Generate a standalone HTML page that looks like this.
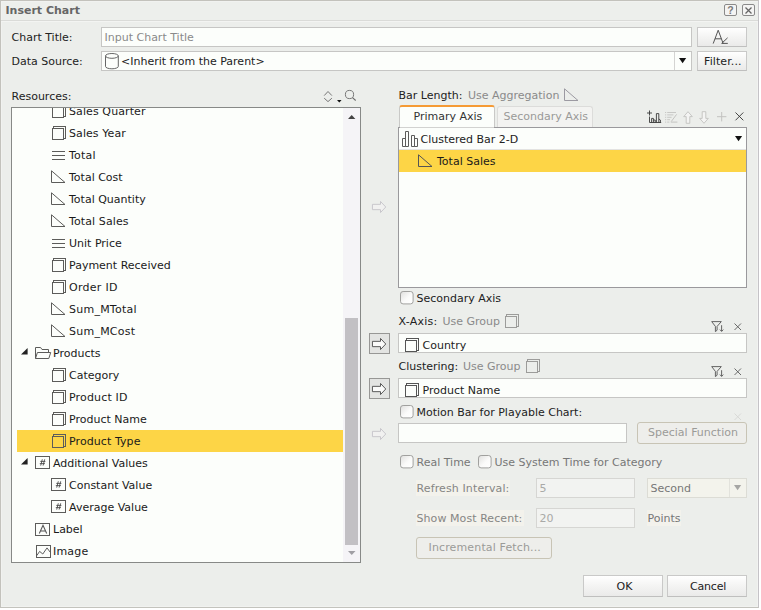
<!DOCTYPE html>
<html><head><meta charset="utf-8"><title>Insert Chart</title>
<style>
html,body{margin:0;padding:0;}
body{width:761px;height:610px;overflow:hidden;background:#ffffff;font-family:"DejaVu Sans", "Liberation Sans", sans-serif;font-size:11px;position:relative;}
#dlg{position:absolute;left:0;top:0;width:757px;height:606px;background:#eceeeb;border:1px solid #c3c2bc;border-right-color:#c5c3c7;border-bottom-color:#c3c3bd;box-sizing:content-box;box-shadow:inset 1px 1px 0 #f1f2f0,inset -1px -1px 0 #f1f2f0;}
.abs{position:absolute;box-sizing:border-box;}
.t{position:absolute;white-space:nowrap;line-height:14px;height:14px;font-size:11px;}
.ic{position:absolute;overflow:visible;}
.fld{position:absolute;box-sizing:border-box;background:#fcfefb;border:1px solid #c6c6c4;}
.btn{position:absolute;box-sizing:border-box;border:1px solid #c9c9c8;border-bottom-color:#bfbfbe;background:linear-gradient(#ffffff,#f5f5f4 45%,#eaeae9);text-align:center;}
.row{position:absolute;left:0;height:22px;}
.cb{position:absolute;box-sizing:border-box;width:13px;height:13px;border:1px solid #8e8e8e;border-radius:3px;background:linear-gradient(135deg,#ffffff 40%,#e4e4e2);}
</style></head><body>
<div id="dlg"></div>

<div class="abs" style="left:1px;top:1px;width:757px;height:19px;background:#edefec;box-shadow:inset 1px 1px 0 #f1f2f0;"></div>
<div class="abs" style="left:1px;top:20px;width:757px;height:1px;background:#dadbd8;"></div>
<div class="abs" style="left:1px;top:21px;width:757px;height:1px;background:#f3f4f2;"></div>
<div class="t " style="left:5.5px;top:4px;color:#666;font-weight:bold;">Insert Chart</div>
<div class="abs" style="left:724px;top:4px;width:13px;height:12px;border:1px solid #8a8a8a;border-radius:2px;background:#f4f4f3;"></div>
<div class="t" style="left:724px;top:3px;width:13px;text-align:center;color:#7a7a7a;font-size:10.5px;font-weight:bold;font-family:'Liberation Sans',sans-serif;">?</div>
<div class="abs" style="left:742px;top:4px;width:13px;height:12px;border:1px solid #8a8a8a;border-radius:2px;background:#f4f4f3;"></div>
<svg class="ic" style="left:745px;top:6.5px" width="7.5" height="7.5" viewBox="0 0 7.5 7.5"><path d="M0.5 0.5 L6.5 6.5 M6.5 0.5 L0.5 6.5" stroke="#666" stroke-width="1.3" fill="none"/></svg>
<div class="t " style="left:11.5px;top:31px;color:#222;">Chart Title:</div>
<div class="fld" style="left:101px;top:27px;width:591px;height:20px;"></div>
<div class="t " style="left:104.5px;top:31px;color:#8a8a8a;">Input Chart Title</div>
<div class="btn" style="left:697px;top:27px;width:50px;height:20px;"></div>
<svg class="ic" style="left:712px;top:29px" width="18" height="16" viewBox="0 0 18 16"><path d="M1.2 14.6 L6.2 1.2 L11.2 14.6 M3 9.8 H9.4" stroke="#555" stroke-width="1" fill="none"/><path d="M15.6 8.8 L9.7 14.4 H15.8" stroke="#555" stroke-width="1" fill="none"/></svg>
<div class="t " style="left:11.5px;top:55px;color:#222;">Data Source:</div>
<div class="fld" style="left:101px;top:51px;width:591px;height:20px;"></div>
<div class="abs" style="left:674px;top:52px;width:1px;height:18px;background:#d4d4d2;"></div>
<svg class="ic" style="left:105px;top:52.5px" width="15" height="17" viewBox="0 0 15 17"><path d="M0.5 2.9 V13.4 A6.4 2.4 0 0 0 13.3 13.4 V2.9" fill="#fcfefb" stroke="#555" stroke-width="0.9"/><ellipse cx="6.9" cy="2.9" rx="6.4" ry="2.4" fill="#fcfefb" stroke="#555" stroke-width="0.9"/></svg>
<div class="t " style="left:121px;top:55px;color:#222;">&lt;Inherit from the Parent&gt;</div>
<svg class="ic" style="left:678.7px;top:58.1px" width="7.2" height="5.2" viewBox="0 0 7.2 5.2"><path d="M0 0 H7.2 L3.6 5.2 Z" fill="#111"/></svg>
<div class="btn" style="left:697px;top:51px;width:50px;height:20px;"></div>
<div class="t " style="left:704px;top:55px;color:#222;letter-spacing:0.1px;">Filter...</div>
<div class="t " style="left:11.5px;top:90px;color:#222;">Resources:</div>
<svg class="ic" style="left:323px;top:90px" width="12" height="13" viewBox="0 0 12 13"><path d="M1.2 5.6 L5 1.5 L8.9 5.6 M1.2 8.2 L5 11.6 L8.9 8.2" stroke="#707070" stroke-width="0.95" fill="none"/></svg>
<svg class="ic" style="left:336.8px;top:99.9px" width="4.6" height="2.4" viewBox="0 0 4.6 2.4"><path d="M0 0 H4.6 L2.3 2.4 Z" fill="#111"/></svg>
<svg class="ic" style="left:345px;top:90px" width="13" height="13" viewBox="0 0 13 13"><circle cx="4.5" cy="4.5" r="4.1" stroke="#6a6a6a" stroke-width="0.9" fill="none"/><path d="M7.5 7.6 L10.7 10.5" stroke="#6a6a6a" stroke-width="1.1"/></svg>
<div class="abs" id="tree" style="left:11px;top:107px;width:350px;height:456px;border:1px solid #878987;background:#fcfefb;overflow:hidden;">
<svg class="ic" style="left:40px;top:-4px" width="15" height="15" viewBox="0 0 15 15" opacity="1"><rect x="1.5" y="0.5" width="12" height="12" rx="0" fill="#fcfefb" stroke="#5c5c5a" stroke-width="1"/><rect x="0.5" y="2.5" width="11" height="11" rx="0" fill="#fcfefb" stroke="#5c5c5a" stroke-width="1"/></svg>
<div class="t " style="left:57px;top:-3px;color:#1a1a1a;letter-spacing:0.1px;">Sales Quarter</div>
<svg class="ic" style="left:40px;top:18px" width="15" height="15" viewBox="0 0 15 15" opacity="1"><rect x="1.5" y="0.5" width="12" height="12" rx="0" fill="#fcfefb" stroke="#5c5c5a" stroke-width="1"/><rect x="0.5" y="2.5" width="11" height="11" rx="0" fill="#fcfefb" stroke="#5c5c5a" stroke-width="1"/></svg>
<div class="t " style="left:57px;top:19px;color:#1a1a1a;letter-spacing:0.08px;">Sales Year</div>
<svg class="ic" style="left:40px;top:43px" width="14" height="10" viewBox="0 0 14 10"><path d="M0 0.5H13M0 4.5H13M0 8.5H13" stroke="#5c5c5a" stroke-width="1"/></svg>
<div class="t " style="left:57px;top:41px;color:#1a1a1a;letter-spacing:0.2px;">Total</div>
<svg class="ic" style="left:39px;top:62px" width="16" height="14" viewBox="0 0 16 14" opacity="1"><path d="M0.5 0.8 V12.5 H14 Z" fill="none" stroke="#5c5c5a" stroke-width="1" stroke-linejoin="miter"/></svg>
<div class="t " style="left:57px;top:63px;color:#1a1a1a;">Total Cost</div>
<svg class="ic" style="left:39px;top:84px" width="16" height="14" viewBox="0 0 16 14" opacity="1"><path d="M0.5 0.8 V12.5 H14 Z" fill="none" stroke="#5c5c5a" stroke-width="1" stroke-linejoin="miter"/></svg>
<div class="t " style="left:57px;top:85px;color:#1a1a1a;">Total Quantity</div>
<svg class="ic" style="left:39px;top:106px" width="16" height="14" viewBox="0 0 16 14" opacity="1"><path d="M0.5 0.8 V12.5 H14 Z" fill="none" stroke="#5c5c5a" stroke-width="1" stroke-linejoin="miter"/></svg>
<div class="t " style="left:57px;top:107px;color:#1a1a1a;letter-spacing:0.11px;">Total Sales</div>
<svg class="ic" style="left:40px;top:131px" width="14" height="10" viewBox="0 0 14 10"><path d="M0 0.5H13M0 4.5H13M0 8.5H13" stroke="#5c5c5a" stroke-width="1"/></svg>
<div class="t " style="left:57px;top:129px;color:#1a1a1a;">Unit Price</div>
<svg class="ic" style="left:40px;top:150px" width="15" height="15" viewBox="0 0 15 15" opacity="1"><rect x="1.5" y="0.5" width="12" height="12" rx="0" fill="#fcfefb" stroke="#5c5c5a" stroke-width="1"/><rect x="0.5" y="2.5" width="11" height="11" rx="0" fill="#fcfefb" stroke="#5c5c5a" stroke-width="1"/></svg>
<div class="t " style="left:57px;top:151px;color:#1a1a1a;">Payment Received</div>
<svg class="ic" style="left:40px;top:172px" width="15" height="15" viewBox="0 0 15 15" opacity="1"><rect x="1.5" y="0.5" width="12" height="12" rx="0" fill="#fcfefb" stroke="#5c5c5a" stroke-width="1"/><rect x="0.5" y="2.5" width="11" height="11" rx="0" fill="#fcfefb" stroke="#5c5c5a" stroke-width="1"/></svg>
<div class="t " style="left:57px;top:173px;color:#1a1a1a;letter-spacing:0.27px;">Order ID</div>
<svg class="ic" style="left:39px;top:194px" width="16" height="14" viewBox="0 0 16 14" opacity="1"><path d="M0.5 0.8 V12.5 H14 Z" fill="none" stroke="#5c5c5a" stroke-width="1" stroke-linejoin="miter"/></svg>
<div class="t " style="left:57px;top:195px;color:#1a1a1a;letter-spacing:0.24px;">Sum_MTotal</div>
<svg class="ic" style="left:39px;top:216px" width="16" height="14" viewBox="0 0 16 14" opacity="1"><path d="M0.5 0.8 V12.5 H14 Z" fill="none" stroke="#5c5c5a" stroke-width="1" stroke-linejoin="miter"/></svg>
<div class="t " style="left:57px;top:217px;color:#1a1a1a;letter-spacing:0.24px;">Sum_MCost</div>
<svg class="ic" style="left:23px;top:239px" width="17" height="13" viewBox="0 0 17 13"><path d="M0.5 11.5 V0.5 H5.6 L7 2.5 H13.5 V5.5" fill="none" stroke="#5c5c5a" stroke-width="1"/><path d="M2.4 5.5 H15.7 L13.8 11.5 H0.5 Z" fill="none" stroke="#5c5c5a" stroke-width="1" stroke-linejoin="miter"/></svg>
<svg class="ic" style="left:9.399999999999999px;top:240.4px" width="7" height="7" viewBox="0 0 7 7"><path d="M6.6 0 V6.6 H0 Z" fill="#222"/></svg>
<div class="t " style="left:41px;top:239px;color:#1a1a1a;">Products</div>
<svg class="ic" style="left:40px;top:260px" width="15" height="15" viewBox="0 0 15 15" opacity="1"><rect x="1.5" y="0.5" width="12" height="12" rx="0" fill="#fcfefb" stroke="#5c5c5a" stroke-width="1"/><rect x="0.5" y="2.5" width="11" height="11" rx="0" fill="#fcfefb" stroke="#5c5c5a" stroke-width="1"/></svg>
<div class="t " style="left:57px;top:261px;color:#1a1a1a;">Category</div>
<svg class="ic" style="left:40px;top:282px" width="15" height="15" viewBox="0 0 15 15" opacity="1"><rect x="1.5" y="0.5" width="12" height="12" rx="0" fill="#fcfefb" stroke="#5c5c5a" stroke-width="1"/><rect x="0.5" y="2.5" width="11" height="11" rx="0" fill="#fcfefb" stroke="#5c5c5a" stroke-width="1"/></svg>
<div class="t " style="left:57px;top:283px;color:#1a1a1a;letter-spacing:0.16px;">Product ID</div>
<svg class="ic" style="left:40px;top:304px" width="15" height="15" viewBox="0 0 15 15" opacity="1"><rect x="1.5" y="0.5" width="12" height="12" rx="0" fill="#fcfefb" stroke="#5c5c5a" stroke-width="1"/><rect x="0.5" y="2.5" width="11" height="11" rx="0" fill="#fcfefb" stroke="#5c5c5a" stroke-width="1"/></svg>
<div class="t " style="left:57px;top:305px;color:#1a1a1a;">Product Name</div>
<div class="abs" style="left:5px;top:322px;width:326px;height:22px;background:#fdd546;"></div>
<svg class="ic" style="left:40px;top:326px" width="15" height="15" viewBox="0 0 15 15" opacity="1"><rect x="1.5" y="0.5" width="12" height="12" rx="0" fill="#fdd546" stroke="#5c5c5a" stroke-width="1"/><rect x="0.5" y="2.5" width="11" height="11" rx="0" fill="#fdd546" stroke="#5c5c5a" stroke-width="1"/></svg>
<div class="t " style="left:57px;top:327px;color:#1a1a1a;letter-spacing:0.08px;">Product Type</div>
<svg class="ic" style="left:23px;top:348px" width="16" height="13" viewBox="0 0 16 13"><rect x="0.5" y="0.5" width="14" height="12" fill="#fcfefb" stroke="#5c5c5a" stroke-width="1"/><path d="M7.3 3.3 L5.7 9.6 M9.7 3.3 L8.1 9.6 M5.3 5.4 H10.4 M4.8 7.6 H9.9" stroke="#444" stroke-width="0.85" fill="none"/></svg>
<svg class="ic" style="left:9.399999999999999px;top:350.4px" width="7" height="7" viewBox="0 0 7 7"><path d="M6.6 0 V6.6 H0 Z" fill="#222"/></svg>
<div class="t " style="left:41px;top:349px;color:#1a1a1a;">Additional Values</div>
<svg class="ic" style="left:39px;top:370px" width="16" height="13" viewBox="0 0 16 13"><rect x="0.5" y="0.5" width="14" height="12" fill="#fcfefb" stroke="#5c5c5a" stroke-width="1"/><path d="M7.3 3.3 L5.7 9.6 M9.7 3.3 L8.1 9.6 M5.3 5.4 H10.4 M4.8 7.6 H9.9" stroke="#444" stroke-width="0.85" fill="none"/></svg>
<div class="t " style="left:57px;top:371px;color:#1a1a1a;">Constant Value</div>
<svg class="ic" style="left:39px;top:392px" width="16" height="13" viewBox="0 0 16 13"><rect x="0.5" y="0.5" width="14" height="12" fill="#fcfefb" stroke="#5c5c5a" stroke-width="1"/><path d="M7.3 3.3 L5.7 9.6 M9.7 3.3 L8.1 9.6 M5.3 5.4 H10.4 M4.8 7.6 H9.9" stroke="#444" stroke-width="0.85" fill="none"/></svg>
<div class="t " style="left:57px;top:393px;color:#1a1a1a;">Average Value</div>
<svg class="ic" style="left:23px;top:415px" width="16" height="13" viewBox="0 0 16 13"><rect x="0.5" y="0.5" width="14" height="12" fill="#fcfefb" stroke="#5c5c5a" stroke-width="1"/><path d="M4.3 10.5 L8 2.3 L11.7 10.5 M5.5 7.9 H10.5" stroke="#555" stroke-width="1.05" fill="none"/></svg>
<div class="t " style="left:41px;top:415px;color:#1a1a1a;">Label</div>
<svg class="ic" style="left:24px;top:437px" width="16" height="13" viewBox="0 0 16 13"><rect x="0.5" y="0.5" width="14" height="12" fill="#fcfefb" stroke="#5c5c5a" stroke-width="1"/><path d="M0.8 10.6 L3.6 6.4 L6.8 9 L11 2.9 L14.2 7.2" stroke="#555" stroke-width="0.95" fill="none"/></svg>
<div class="t " style="left:41px;top:437px;color:#1a1a1a;letter-spacing:0.2px;">Image</div>
<div class="abs" style="left:331px;top:0;width:17px;height:454px;background:#f5f4f7;"></div>
<div class="abs" style="left:333px;top:210px;width:13px;height:227px;background:#c2c0c4;"></div>
<svg class="ic" style="left:335.9px;top:6.799999999999997px" width="7.4" height="4.1" viewBox="0 0 7.4 4.1"><path d="M0 4.1 H7.4 L3.7 0 Z" fill="#444"/></svg>
<svg class="ic" style="left:336px;top:443px" width="7.5" height="4" viewBox="0 0 7.5 4"><path d="M0 0 H7.5 L3.75 4 Z" fill="#a09fa4"/></svg>
</div>
<svg class="ic" style="left:372px;top:201.1px" width="15" height="12" viewBox="0 0 15 12" opacity="1"><path d="M0.45 3.35 H8.5 V0.45 L13.75 6 L8.5 11.55 V8.65 H0.45 Z" fill="#f1f1f0" stroke="#c4c3c8" stroke-width="0.9" stroke-linejoin="miter"/></svg>
<div class="abs" style="left:369px;top:333px;width:21px;height:21px;border:1px solid #979795;background:#e3e4e2;"></div>
<svg class="ic" style="left:372px;top:337.7px" width="15" height="12" viewBox="0 0 15 12" opacity="1"><path d="M0.45 3.35 H8.5 V0.45 L13.75 6 L8.5 11.55 V8.65 H0.45 Z" fill="#fbfbfa" stroke="#4a4a4a" stroke-width="0.9" stroke-linejoin="miter"/></svg>
<div class="abs" style="left:369px;top:378px;width:21px;height:21px;border:1px solid #979795;background:#e3e4e2;"></div>
<svg class="ic" style="left:372px;top:382.7px" width="15" height="12" viewBox="0 0 15 12" opacity="1"><path d="M0.45 3.35 H8.5 V0.45 L13.75 6 L8.5 11.55 V8.65 H0.45 Z" fill="#fbfbfa" stroke="#4a4a4a" stroke-width="0.9" stroke-linejoin="miter"/></svg>
<svg class="ic" style="left:372px;top:428px" width="15" height="12" viewBox="0 0 15 12" opacity="1"><path d="M0.45 3.35 H8.5 V0.45 L13.75 6 L8.5 11.55 V8.65 H0.45 Z" fill="#f1f1f0" stroke="#c4c3c8" stroke-width="0.9" stroke-linejoin="miter"/></svg>
<div class="t " style="left:398.5px;top:89px;color:#222;">Bar Length:</div>
<div class="t " style="left:468px;top:89px;color:#8a8a8a;">Use Aggregation</div>
<svg class="ic" style="left:564px;top:88px" width="16" height="14" viewBox="0 0 16 14" opacity="1"><path d="M0.5 0.8 V12.5 H14 Z" fill="none" stroke="#9c9aa2" stroke-width="1" stroke-linejoin="miter"/></svg>
<div class="abs" style="left:496.5px;top:106px;width:96px;height:21px;border:1px solid #dcdcda;border-bottom:none;border-radius:3px 3px 0 0;background:#f3f3f1;"></div>
<div class="t " style="left:503.5px;top:110px;color:#9a9a98;">Secondary Axis</div>
<div class="abs" style="left:399px;top:105px;width:96px;height:24px;border:1px solid #c9c9c7;border-top:2px solid #f59a35;border-bottom:none;border-radius:3px 3px 0 0;background:#fcfefb;"></div>
<div class="t " style="left:413.5px;top:110px;color:#333;">Primary Axis</div>
<svg class="ic" style="left:646px;top:109px" width="16" height="15" viewBox="0 0 16 15"><path d="M1 4 H6 M3.5 1.5 V6.5" stroke="#3a3a3a" stroke-width="0.9"/><path d="M3.5 7.5 V13.5 H15.2" stroke="#3a3a3a" stroke-width="0.9" fill="none"/><path d="M5.6 13.5 V9.4 H7.4 V13.5 M7.4 11 H9.2 V13.5 M10.4 13.5 V4.6 H12.8 V13.5 M12.8 10 L14.4 11 V13.5" stroke="#3a3a3a" stroke-width="0.9" fill="none"/></svg>
<svg class="ic" style="left:664.5px;top:111.5px" width="13" height="11" viewBox="0 0 13 11"><path d="M0 0.5 H1.2 M0 2.9 H1.2 M0 5.3 H1.2 M0 7.7 H1.2 M0 10.1 H1.2" stroke="#c8c8c6" stroke-width="1"/><path d="M2.2 0.5 H11 M2.2 2.9 H8.4 M2.2 5.3 H6.6 M2.2 7.7 H5 M2.2 10.1 H4.4" stroke="#c8c8c6" stroke-width="1"/><path d="M11.6 2.4 L6.2 9.6 M5.8 10.1 H12.4" stroke="#c4c4c2" stroke-width="1" fill="none"/></svg>
<svg class="ic" style="left:683px;top:110.5px" width="10" height="13" viewBox="0 0 10 13"><path d="M5 0.7 L9.3 5.6 H6.8 V12.3 H3.2 V5.6 H0.7 Z" fill="#f4f4f3" stroke="#c2c2c0" stroke-width="0.9"/></svg>
<svg class="ic" style="left:699px;top:110.5px" width="10" height="13" viewBox="0 0 10 13"><path d="M5 12.3 L9.3 7.4 H6.8 V0.7 H3.2 V7.4 H0.7 Z" fill="#f4f4f3" stroke="#c2c2c0" stroke-width="0.9"/></svg>
<svg class="ic" style="left:716.5px;top:112px" width="10" height="10" viewBox="0 0 10 10"><path d="M0 4.7 H9.4 M4.7 0 V9.4" stroke="#c2c2c0" stroke-width="1"/></svg>
<svg class="ic" style="left:734.6px;top:112px" width="9.3" height="9.3" viewBox="0 0 9.3 9.3"><path d="M0.5 0.5 L8.3 8.3 M8.3 0.5 L0.5 8.3" stroke="#333" stroke-width="0.9" fill="none"/></svg>
<div class="abs" style="left:398px;top:127px;width:349px;height:161px;border:1px solid #9a999c;background:#fcfefb;"></div>
<div class="abs" style="left:399px;top:149px;width:347px;height:1px;background:#e3e3e1;"></div>
<div class="abs" style="left:400px;top:127px;width:94px;height:1px;background:#d2d2d0;"></div>
<svg class="ic" style="left:402px;top:131px" width="17" height="16" viewBox="0 0 17 16"><path d="M0.5 15.5 V7.5 H3.5 V15.5 Z M3.5 15.5 V0.5 H6.5 V15.5 Z M9.5 15.5 V4.5 H12.5 V15.5 Z M12.5 15.5 V7.5 H15.5 V15.5 Z" stroke="#5c5c5a" stroke-width="1" fill="none"/></svg>
<div class="t " style="left:420.5px;top:133px;color:#222;">Clustered Bar 2-D</div>
<svg class="ic" style="left:734.9px;top:135.8px" width="7.1" height="5.2" viewBox="0 0 7.1 5.2"><path d="M0 0 H7.1 L3.55 5.2 Z" fill="#111"/></svg>
<div class="abs" style="left:399px;top:150px;width:347px;height:22px;background:#fdd546;"></div>
<svg class="ic" style="left:418px;top:154px" width="16" height="14" viewBox="0 0 16 14" opacity="1"><path d="M0.5 0.8 V12.5 H14 Z" fill="none" stroke="#555" stroke-width="1" stroke-linejoin="miter"/></svg>
<div class="t " style="left:437px;top:155px;color:#1a1a1a;">Total Sales</div>
<svg class="ic" style="left:400.0px;top:291.2px" width="14" height="14" viewBox="0 0 14 14"><defs><linearGradient id="cbg" x1="0" y1="0" x2="1" y2="1"><stop offset="0" stop-color="#dfdfdd"/><stop offset="0.55" stop-color="#fbfbfa"/><stop offset="1" stop-color="#ffffff"/></linearGradient></defs><rect x="0.5" y="0.5" width="12.6" height="12.4" rx="2.6" fill="url(#cbg)" stroke="#979795" stroke-width="0.9"/></svg>
<div class="t " style="left:416.5px;top:292px;color:#222;">Secondary Axis</div>
<div class="t " style="left:398.5px;top:315px;color:#222;letter-spacing:0.25px;">X-Axis:</div>
<div class="t " style="left:442.5px;top:315px;color:#8a8a8a;">Use Group</div>
<svg class="ic" style="left:505px;top:314px" width="15" height="15" viewBox="0 0 15 15" opacity="1"><rect x="1.5" y="0.5" width="12" height="12" rx="0" fill="#eceeeb" stroke="#9c9c9a" stroke-width="1"/><rect x="0.5" y="2.5" width="11" height="11" rx="0" fill="#eceeeb" stroke="#9c9c9a" stroke-width="1"/></svg>
<svg class="ic" style="left:711px;top:321px" width="14" height="12" viewBox="0 0 14 12"><path d="M0.7 0.6 H10.3 L6.1 5.4 V9.2 L4.4 10.6 V5.4 Z" fill="none" stroke="#555" stroke-width="0.9" stroke-linejoin="round"/><path d="M10.6 4.2 V10.2 M8.9 8.6 L10.6 10.4 L12.3 8.6" fill="none" stroke="#555" stroke-width="0.9"/></svg>
<svg class="ic" style="left:733.8px;top:322.9px" width="8" height="8" viewBox="0 0 8 8"><path d="M0.5 0.5 L7 7 M7 0.5 L0.5 7" stroke="#5a5a5a" stroke-width="0.9" fill="none"/></svg>
<div class="fld" style="left:398px;top:333px;width:349px;height:20px;"></div>
<svg class="ic" style="left:405px;top:338px" width="15" height="15" viewBox="0 0 15 15" opacity="1"><rect x="1.5" y="0.5" width="12" height="12" rx="0" fill="#fcfefb" stroke="#555" stroke-width="1"/><rect x="0.5" y="2.5" width="11" height="11" rx="0" fill="#fcfefb" stroke="#555" stroke-width="1"/></svg>
<div class="t " style="left:422.5px;top:339px;color:#222;">Country</div>
<div class="t " style="left:398.5px;top:360px;color:#222;">Clustering:</div>
<div class="t " style="left:463px;top:360px;color:#8a8a8a;">Use Group</div>
<svg class="ic" style="left:526px;top:359px" width="15" height="15" viewBox="0 0 15 15" opacity="1"><rect x="1.5" y="0.5" width="12" height="12" rx="0" fill="#eceeeb" stroke="#9c9c9a" stroke-width="1"/><rect x="0.5" y="2.5" width="11" height="11" rx="0" fill="#eceeeb" stroke="#9c9c9a" stroke-width="1"/></svg>
<svg class="ic" style="left:711px;top:366px" width="14" height="12" viewBox="0 0 14 12"><path d="M0.7 0.6 H10.3 L6.1 5.4 V9.2 L4.4 10.6 V5.4 Z" fill="none" stroke="#555" stroke-width="0.9" stroke-linejoin="round"/><path d="M10.6 4.2 V10.2 M8.9 8.6 L10.6 10.4 L12.3 8.6" fill="none" stroke="#555" stroke-width="0.9"/></svg>
<svg class="ic" style="left:733.8px;top:367.9px" width="8" height="8" viewBox="0 0 8 8"><path d="M0.5 0.5 L7 7 M7 0.5 L0.5 7" stroke="#5a5a5a" stroke-width="0.9" fill="none"/></svg>
<div class="fld" style="left:398px;top:378px;width:349px;height:20px;"></div>
<svg class="ic" style="left:405px;top:383px" width="15" height="15" viewBox="0 0 15 15" opacity="1"><rect x="1.5" y="0.5" width="12" height="12" rx="0" fill="#fcfefb" stroke="#555" stroke-width="1"/><rect x="0.5" y="2.5" width="11" height="11" rx="0" fill="#fcfefb" stroke="#555" stroke-width="1"/></svg>
<div class="t " style="left:422.5px;top:384px;color:#222;">Product Name</div>
<svg class="ic" style="left:400.0px;top:405.2px" width="14" height="14" viewBox="0 0 14 14"><defs><linearGradient id="cbg" x1="0" y1="0" x2="1" y2="1"><stop offset="0" stop-color="#dfdfdd"/><stop offset="0.55" stop-color="#fbfbfa"/><stop offset="1" stop-color="#ffffff"/></linearGradient></defs><rect x="0.5" y="0.5" width="12.6" height="12.4" rx="2.6" fill="url(#cbg)" stroke="#979795" stroke-width="0.9"/></svg>
<div class="t " style="left:416.5px;top:406px;color:#222;">Motion Bar for Playable Chart:</div>
<svg class="ic" style="left:733.8px;top:413px" width="8" height="8" viewBox="0 0 8 8"><path d="M0.5 0.5 L7 7 M7 0.5 L0.5 7" stroke="#d6d6d4" stroke-width="0.9" fill="none"/></svg>
<div class="fld" style="left:398px;top:423px;width:229px;height:20px;"></div>
<div class="abs" style="left:637px;top:422px;width:110px;height:21.5px;border:1px solid #c8c4b5;border-radius:3px;background:#eeeeeb;"></div>
<div class="t " style="left:648px;top:426px;color:#9b9b98;">Special Function</div>
<svg class="ic" style="left:400.0px;top:455.2px" width="14" height="14" viewBox="0 0 14 14"><defs><linearGradient id="cbg" x1="0" y1="0" x2="1" y2="1"><stop offset="0" stop-color="#dfdfdd"/><stop offset="0.55" stop-color="#fbfbfa"/><stop offset="1" stop-color="#ffffff"/></linearGradient></defs><rect x="0.5" y="0.5" width="12.6" height="12.4" rx="2.6" fill="url(#cbg)" stroke="#979795" stroke-width="0.9"/></svg>
<div class="t " style="left:416.5px;top:456px;color:#777;">Real Time</div>
<svg class="ic" style="left:478.0px;top:455.2px" width="14" height="14" viewBox="0 0 14 14"><defs><linearGradient id="cbg" x1="0" y1="0" x2="1" y2="1"><stop offset="0" stop-color="#dfdfdd"/><stop offset="0.55" stop-color="#fbfbfa"/><stop offset="1" stop-color="#ffffff"/></linearGradient></defs><rect x="0.5" y="0.5" width="12.6" height="12.4" rx="2.6" fill="url(#cbg)" stroke="#979795" stroke-width="0.9"/></svg>
<div class="t " style="left:494.5px;top:456px;color:#777;">Use System Time for Category</div>
<div class="abs" style="left:416px;top:480px;width:94px;height:16px;background:#f3f2ec;"></div>
<div class="t " style="left:416.5px;top:481.5px;color:#868684;letter-spacing:0.12px;">Refresh Interval:</div>
<div class="abs" style="left:536px;top:478px;width:99px;height:20px;border:1px solid #d6d6d3;background:#f2f3f1;"></div>
<div class="t " style="left:539.5px;top:482px;color:#a9a9a7;">5</div>
<div class="abs" style="left:647px;top:478px;width:100px;height:20px;border:1px solid #dcdcd5;background:#f3f3ec;"></div>
<div class="abs" style="left:729px;top:479px;width:1px;height:18px;background:#e2e2dc;"></div>
<div class="t " style="left:650.5px;top:482px;color:#777;">Second</div>
<svg class="ic" style="left:734.1px;top:485px" width="7.2" height="5.2" viewBox="0 0 7.2 5.2"><path d="M0 0 H7.2 L3.6 5.2 Z" fill="#a6a6a4"/></svg>
<div class="abs" style="left:416px;top:510px;width:107.5px;height:16px;background:#f3f2ec;"></div>
<div class="t " style="left:416.5px;top:511.5px;color:#868684;letter-spacing:0.07px;">Show Most Recent:</div>
<div class="abs" style="left:536px;top:508px;width:99px;height:20px;border:1px solid #d6d6d3;background:#f2f3f1;"></div>
<div class="t " style="left:539.5px;top:512px;color:#a9a9a7;">20</div>
<div class="abs" style="left:647px;top:510px;width:34px;height:16px;background:#f3f2ec;"></div>
<div class="t " style="left:647.5px;top:511.5px;color:#777;">Points</div>
<div class="abs" style="left:416px;top:537px;width:136px;height:21.5px;border:1px solid #c8c4b5;border-radius:3px;background:#eeeeeb;"></div>
<div class="t " style="left:428.5px;top:541px;color:#9b9b98;letter-spacing:0.14px;">Incremental Fetch...</div>
<div class="btn" style="left:583px;top:575px;width:80px;height:22px;"></div>
<div class="t " style="left:616.5px;top:580px;color:#222;">OK</div>
<div class="btn" style="left:667px;top:575px;width:80px;height:22px;"></div>
<div class="t " style="left:690px;top:580px;color:#222;letter-spacing:-0.2px;">Cancel</div>
</body></html>
